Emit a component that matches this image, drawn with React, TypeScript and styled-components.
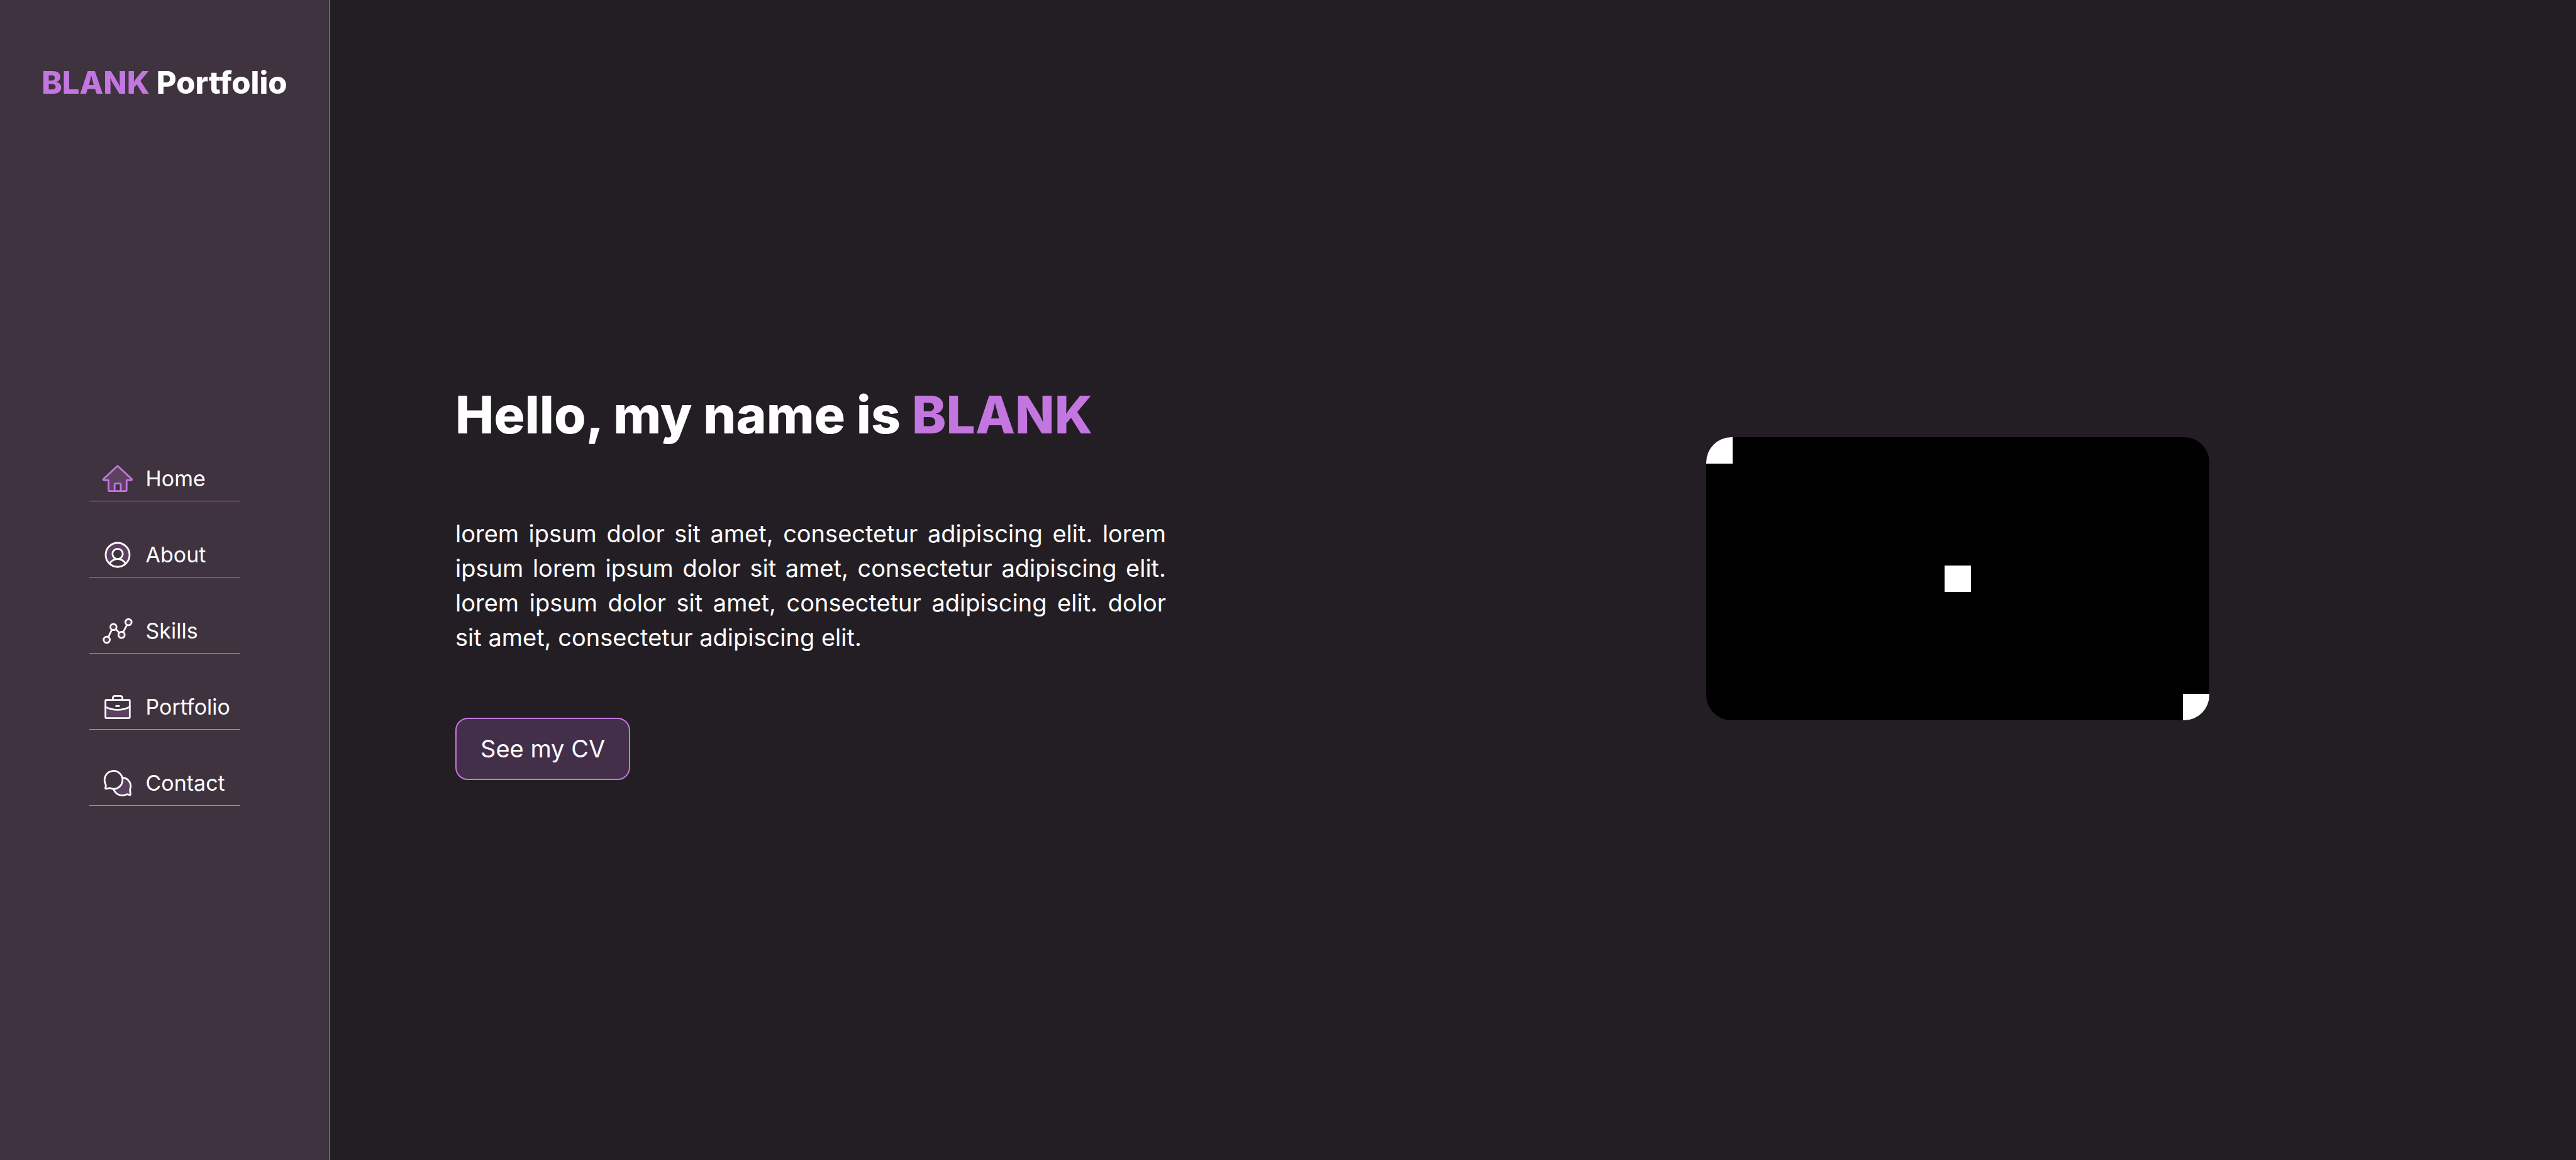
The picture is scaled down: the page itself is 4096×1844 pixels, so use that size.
import React from "react";
import styled, { createGlobalStyle } from "styled-components";

const color = {
  page: "#231e23",
  sidebar: "#3e333e",
  accent: "#c376e0",
  button: "#442f4a",
  iconFill: "#5c4160",
  text: "#ffffff",
};

const GlobalStyle = createGlobalStyle`
  *, *::before, *::after { box-sizing: border-box; }
  body {
    margin: 0;
    background: ${color.page};
    color: ${color.text};
    font-family: Inter, "Open Sans", sans-serif;
  }
`;

const Layout = styled.div`
  display: flex;
  min-height: 100vh;
`;

const Sidebar = styled.aside`
  flex: none;
  display: flex;
  flex-direction: column;
  align-items: center;
  width: 524px;
  padding-top: 92px;
  background: ${color.sidebar};
  border-right: 1px solid ${color.accent};
`;

const Logo = styled.div`
  font-size: 49px;
  font-weight: 800;
  line-height: 80px;
  white-space: nowrap;
`;

const Accent = styled.span`
  color: ${color.accent};
`;

const Nav = styled.nav`
  margin: auto 0;
`;

const NavList = styled.ul`
  display: grid;
  gap: 60px;
  width: 240px;
  margin: 0;
  padding: 0;
  list-style: none;
`;

const NavLink = styled.a`
  display: flex;
  align-items: center;
  gap: 20px;
  padding: 0 0 10px 20px;
  border-bottom: 1px solid ${color.accent};
  color: inherit;
  font-size: 34px;
  line-height: 48px;
  text-decoration: none;
`;

const Icon = styled.svg<{ $active?: boolean }>`
  flex: none;
  display: block;
  width: 50px;
  height: 50px;
  fill: none;
  stroke: ${(p) => (p.$active ? color.accent : color.text)};
  stroke-width: 2.8;
  stroke-linecap: round;
  stroke-linejoin: round;

  .tint { fill: ${color.iconFill}; }
  .tint-only { fill: ${color.iconFill}; stroke: none; }
  .base { fill: ${color.sidebar}; }
`;

const Main = styled.main`
  flex: 1;
  display: grid;
  grid-template-columns: 1fr 1fr;
  align-items: center;
  gap: 40px;
  padding: 0 200px 4px;
`;

const Intro = styled.section`
  display: flex;
  flex-direction: column;
  align-items: flex-start;
`;

const Title = styled.h1`
  margin: 0 0 102px;
  font-size: 82px;
  font-weight: 800;
  line-height: 118px;
`;

const Lead = styled.p`
  max-width: 1130px;
  margin: 0 0 100px;
  font-size: 38px;
  line-height: 55px;
  text-align: justify;
`;

const CvButton = styled.button`
  padding: 20px 38px;
  border: 2px solid ${color.accent};
  border-radius: 20px;
  background: ${color.button};
  color: inherit;
  font: inherit;
  font-size: 38px;
  line-height: 55px;
  cursor: pointer;
`;

const Picture = styled.div`
  justify-self: center;
  display: grid;
  grid-template-columns: repeat(3, 1fr);
  width: 800px;
  height: 450px;
  overflow: hidden;
  border-radius: 40px;
  background: #000;
`;

const Square = styled.span<{ $place: "start" | "center" | "end" }>`
  place-self: ${(p) => p.$place};
  width: 42px;
  height: 42px;
  background: #fff;
`;

const HomeIcon = () => (
  <Icon $active viewBox="0 0 50 50" aria-hidden="true">
    <path className="tint" d="M23.9 5.5 3 25.1c-1.2 1.1-.7 2.3.8 2.3h6.8V43c0 1.1.6 1.7 1.7 1.7h25.3c1.1 0 1.7-.6 1.7-1.7V27.4h6.9c1.5 0 2-1.2.8-2.3L26.1 5.5c-.7-.6-1.5-.6-2.2 0Z" />
    <path className="base" d="M20.2 44.7V34.5c0-1.2.7-1.9 1.9-1.9h6c1.2 0 1.9.7 1.9 1.9v10.2Z" />
  </Icon>
);

const AboutIcon = () => (
  <Icon viewBox="0 0 50 50" aria-hidden="true">
    <circle className="tint" cx="25" cy="25" r="19" />
    <path className="base" d="M12.3 39.1C15 34.7 19.6 31.7 25 31.7s10 3 12.7 7.4C34.4 42.2 29.9 44 25 44s-9.4-1.8-12.7-4.9Z" />
    <circle className="base" cx="25" cy="23.5" r="8.2" />
  </Icon>
);

const SkillsIcon = () => (
  <Icon viewBox="0 0 50 50" aria-hidden="true">
    <path d="m10.2 34.7 5.6-11.5M22.3 22.3l5.3 5.4M33.8 26.8l6-11.2" />
    <circle className="tint" cx="7.7" cy="39" r="4.9" />
    <circle className="tint" cx="18.4" cy="18.7" r="4.9" />
    <circle className="tint" cx="31.3" cy="31.3" r="4.9" />
    <circle className="tint" cx="42.3" cy="11" r="4.9" />
  </Icon>
);

const PortfolioIcon = () => (
  <Icon viewBox="0 0 50 50" aria-hidden="true">
    <path className="tint-only" d="M5.7 25.3c12 5.3 26.6 5.3 38.6 0v17.3H5.7Z" />
    <rect x="5.7" y="13.6" width="38.6" height="29" rx="1" />
    <path d="M17.4 13.3v-2.5c0-2.2 1.2-3.4 3.4-3.4h8.4c2.2 0 3.4 1.2 3.4 3.4v2.5" />
    <path d="M5.7 24.7c12 6.1 26.6 6.1 38.6 0M22.7 23.4h4.6" />
  </Icon>
);

const ContactIcon = () => (
  <Icon viewBox="0 0 50 50" aria-hidden="true">
    <path className="tint" d="M33 16.1a13.7 13.7 0 0 1 11.6 19.3l.9 7.1c.1 1-.4 1.4-1.3 1.2l-4-1.1C32.5 46.5 22.6 44.2 18.7 35Z" />
    <path className="base" d="M5.6 25.8A14.3 14.3 0 1 1 12.3 32.6l-5.4 1.2c-1 .2-1.5-.3-1.3-1.3l.8-3.2Z" />
  </Icon>
);

const links = [
  { label: "Home", href: "#home", Glyph: HomeIcon },
  { label: "About", href: "#about", Glyph: AboutIcon },
  { label: "Skills", href: "#skills", Glyph: SkillsIcon },
  { label: "Portfolio", href: "#portfolio", Glyph: PortfolioIcon },
  { label: "Contact", href: "#contact", Glyph: ContactIcon },
];

export default function App() {
  return (
    <Layout>
      <GlobalStyle />
      <Sidebar>
        <Logo>
          <Accent>BLANK</Accent> Portfolio
        </Logo>
        <Nav aria-label="Main">
          <NavList>
            {links.map(({ label, href, Glyph }) => (
              <li key={label}>
                <NavLink href={href}>
                  <Glyph />
                  {label}
                </NavLink>
              </li>
            ))}
          </NavList>
        </Nav>
      </Sidebar>
      <Main>
        <Intro>
          <Title>
            Hello, my name is <Accent>BLANK</Accent>
          </Title>
          <Lead>
            lorem ipsum dolor sit amet, consectetur adipiscing elit. lorem ipsum
            lorem ipsum dolor sit amet, consectetur adipiscing elit. lorem ipsum
            dolor sit amet, consectetur adipiscing elit. dolor sit amet,
            consectetur adipiscing elit.
          </Lead>
          <CvButton type="button">See my CV</CvButton>
        </Intro>
        <Picture role="img" aria-label="Portrait">
          <Square $place="start" />
          <Square $place="center" />
          <Square $place="end" />
        </Picture>
      </Main>
    </Layout>
  );
}
